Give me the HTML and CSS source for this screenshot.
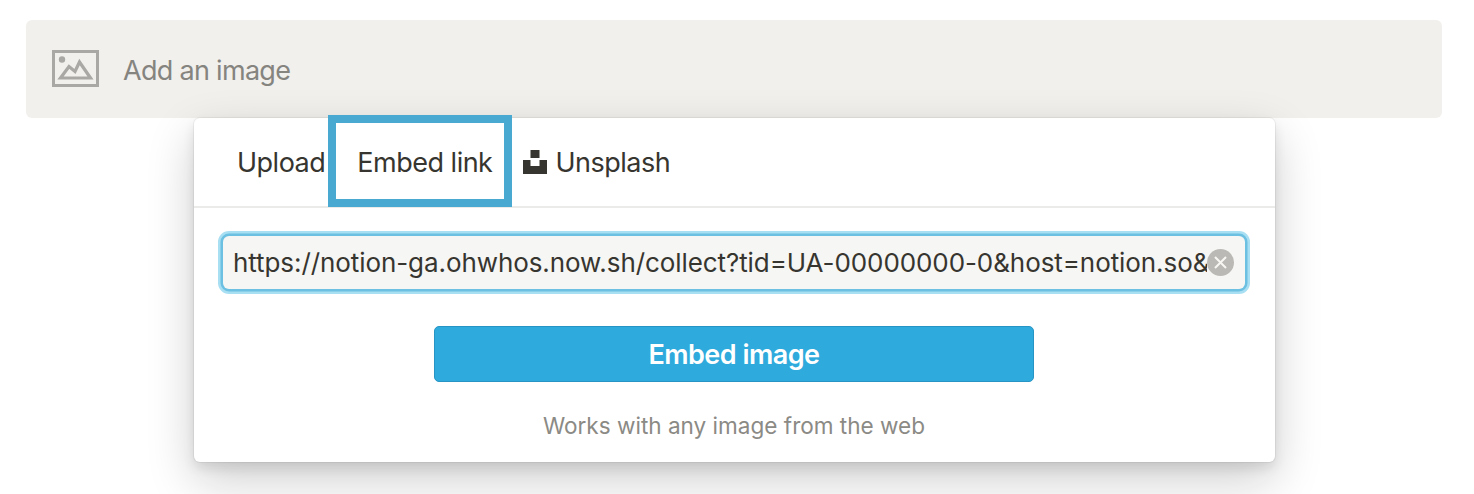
FILE: index.html
```html
<!DOCTYPE html>
<html lang="en">
<head>
<meta charset="utf-8">
<title>Add an image</title>
<link rel="stylesheet" href="styles.css">
</head>
<body>
<div class="block">
  <div class="placeholder">
    <svg class="ph-icon" width="47" height="37" viewBox="0 0 47 37" fill="none">
      <rect x="1.500" y="1.500" width="44" height="34" stroke="#a9a8a4" stroke-width="3"/>
      <circle cx="10" cy="9.500" r="3.200" fill="#a9a8a4"/>
      <path d="M8.500 28 L17 16.500 L23 21.500 L27.500 12 L38.500 28 Z" stroke="#a9a8a4" stroke-width="3.200" stroke-linejoin="miter"/>
    </svg>
    <span class="ph-text">Add an image</span>
  </div>
  <div class="popover">
    <div class="tabs">
      <div class="tab">Upload</div>
      <div class="tab tab-marked">Embed link</div>
      <div class="tab tab-icon">
        <svg width="24" height="24" viewBox="0 0 24 24" fill="#37352f"><path d="M7.500 0h9v8h-9zM0 10h7.500v6h9v-6H24v14H0z"/></svg>
        Unsplash
      </div>
    </div>
    <div class="body">
      <div class="field">
        <div class="field-text">https://notion-ga.ohwhos.now.sh/collect?tid=UA-00000000-0&amp;host=notion.so&amp;page=/my-page</div>
        <svg class="clear" width="27" height="27" viewBox="0 0 27 27"><circle cx="13.500" cy="13.500" r="13.500" fill="#bab9b5"/><path d="M8 8l11 11M19 8L8 19" stroke="#f7f6f3" stroke-width="2" fill="none"/></svg>
      </div>
      <div class="button">Embed image</div>
      <div class="caption">Works with any image from the web</div>
    </div>
  </div>
</div>
</body>
</html>
```
FILE: styles.css
```css
* { box-sizing: border-box; }
html, body { margin: 0; height: 100%; background: #fff; overflow: hidden; }
body { font-family: Inter, "Liberation Sans", sans-serif; color: #37352f; padding: 20px 32px 0 26px; }
.block { position: relative; }
.placeholder {
  height: 98px; background: #f1f0ed; border-radius: 6px;
  display: flex; align-items: center; padding-left: 26px; gap: 24px;
}
.ph-icon { display: block; margin-top: -1px; }
.ph-text { font-size: 27px; color: #85847f; letter-spacing: -0.7px; padding-top: 2px; }
.popover {
  position: absolute; left: 168px; top: 98px; width: 1081px; height: 344px;
  background: #fff; border-radius: 6px;
  box-shadow: 0 0 0 1px rgba(15,15,15,.05), 0 6px 12px rgba(15,15,15,.1), 0 18px 48px rgba(15,15,15,.2);
}
.tabs { height: 90px; display: flex; align-items: center; padding: 1px 0 0 43px; border-bottom: 2px solid #ebebea; font-size: 27px; position: relative; }
.tab { letter-spacing: -0.5px; white-space: nowrap; }
.tab-marked { margin-left: 32px; position: relative; }
.tab-marked::after {
  content: ""; position: absolute; left: -29px; right: -20px; top: -31px; bottom: -28px;
  border: 8px solid #4aa9d0;
}
.tab-icon { margin-left: 31px; display: flex; align-items: center; gap: 8px; }
.tab-icon svg { display: block; margin-top: -1px; }
.body { display: flex; flex-direction: column; align-items: center; padding: 27.500px 30px 0 29px; }
.field {
  width: 1022px; height: 53px; border-radius: 6px; background: #f6f6f4;
  box-shadow: 0 0 0 2.500px #6cc0e2, 0 0 0 5px #a8dff2;
  display: flex; align-items: center; padding: 0 11px 0 10px;
}
.field-text { flex: 1; min-width: 0; overflow: hidden; white-space: nowrap; font-size: 26px; letter-spacing: -0.08px; }
.clear { flex: none; display: block; }
.button {
  margin-top: 37.500px; flex: none; width: 600px; height: 56px; background: #2eaadc; border: 1px solid #2795c4;
  border-radius: 5px; color: #fff; font-size: 27px; font-weight: 600; letter-spacing: -0.52px;
  display: flex; align-items: center; justify-content: center;
}
.caption { margin-top: 30px; font-size: 22.550px; color: #8b8a85; }
```
